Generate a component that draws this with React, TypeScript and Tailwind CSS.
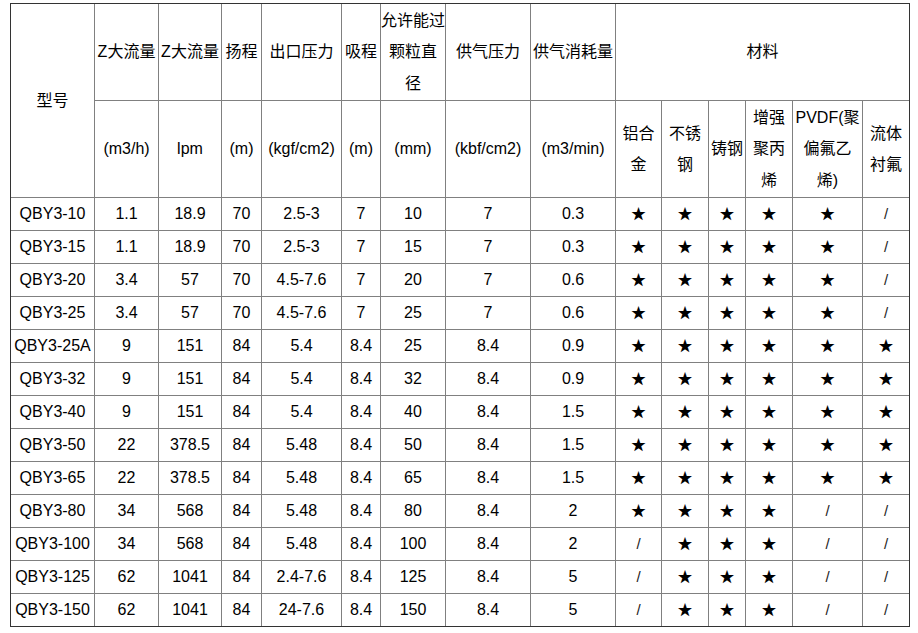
import React from "react";

const S = "★";
const N = "/";

const rows: string[][] = [
  ["QBY3-10", "1.1", "18.9", "70", "2.5-3", "7", "10", "7", "0.3", S, S, S, S, S, N],
  ["QBY3-15", "1.1", "18.9", "70", "2.5-3", "7", "15", "7", "0.3", S, S, S, S, S, N],
  ["QBY3-20", "3.4", "57", "70", "4.5-7.6", "7", "20", "7", "0.6", S, S, S, S, S, N],
  ["QBY3-25", "3.4", "57", "70", "4.5-7.6", "7", "25", "7", "0.6", S, S, S, S, S, N],
  ["QBY3-25A", "9", "151", "84", "5.4", "8.4", "25", "8.4", "0.9", S, S, S, S, S, S],
  ["QBY3-32", "9", "151", "84", "5.4", "8.4", "32", "8.4", "0.9", S, S, S, S, S, S],
  ["QBY3-40", "9", "151", "84", "5.4", "8.4", "40", "8.4", "1.5", S, S, S, S, S, S],
  ["QBY3-50", "22", "378.5", "84", "5.48", "8.4", "50", "8.4", "1.5", S, S, S, S, S, S],
  ["QBY3-65", "22", "378.5", "84", "5.48", "8.4", "65", "8.4", "1.5", S, S, S, S, S, S],
  ["QBY3-80", "34", "568", "84", "5.48", "8.4", "80", "8.4", "2", S, S, S, S, N, N],
  ["QBY3-100", "34", "568", "84", "5.48", "8.4", "100", "8.4", "2", N, S, S, S, N, N],
  ["QBY3-125", "62", "1041", "84", "2.4-7.6", "8.4", "125", "8.4", "5", N, S, S, S, N, N],
  ["QBY3-150", "62", "1041", "84", "24-7.6", "8.4", "150", "8.4", "5", N, S, S, S, N, N],
];

const headers: React.ReactNode[] = [
  "Z大流量",
  "Z大流量",
  "扬程",
  "出口压力",
  "吸程",
  <span key="yx" className="whitespace-nowrap">
    允许能过
    <br />
    颗粒直
    <br />径
  </span>,
  "供气压力",
  "供气消耗量",
];
const units = ["(m3/h)", "lpm", "(m)", "(kgf/cm2)", "(m)", "(mm)", "(kbf/cm2)", "(m3/min)"];
const materials = ["铝合金", "不锈钢", "铸钢", "增强聚丙烯", "PVDF(聚偏氟乙烯)", "流体衬氟"];

const cell = "flex items-center justify-center text-center px-px border-[#808080] leading-[31.5px]";

function Val({ v }: { v: string }) {
  if (v === S) {
    return <span className="text-[15px] text-black">{S}</span>;
  }
  if (v === N) {
    return <span className="text-[15px] text-[#222]">/</span>;
  }
  return <span>{v}</span>;
}

export default function App() {
  return (
    <div className="min-h-[633px] w-[918px] bg-white pt-[3px] pl-[10px]">
      <div
        className="grid w-[900px] border border-[#333333] text-[16px] text-black"
        style={{
          fontFamily: '"Liberation Sans", Arial, "Noto Sans CJK SC", sans-serif',
        }}
      >
        <div className="grid grid-cols-[84px_64px_63px_40px_80px_39px_65px_85px_85px_46px_47px_37px_47px_70px_46px] grid-rows-[97px_97px_repeat(12,33px)_32px]">
          <div className={`${cell} row-span-2 border-r border-b`}>型号</div>
          {headers.map((h, i) => (
            <div key={"h" + i} className={`${cell} border-r border-b ${i === 5 ? "px-0" : ""}`}>
              {h}
            </div>
          ))}
          <div className={`${cell} col-span-6 border-b`}>材料</div>
          {units.map((u, i) => (
            <div key={"u" + i} className={`${cell} border-r border-b`}>
              {u}
            </div>
          ))}
          {materials.map((m, i) => (
            <div
              key={"m" + i}
              className={`${cell} border-b ${i < materials.length - 1 ? "border-r" : ""}`}
            >
              {m}
            </div>
          ))}
          {rows.map((r, ri) =>
            r.map((v, ci) => (
              <div
                key={ri + "-" + ci}
                className={`${cell} ${ci < r.length - 1 ? "border-r" : ""} ${
                  ri < rows.length - 1 ? "border-b" : ""
                }`}
              >
                <Val v={v} />
              </div>
            ))
          )}
        </div>
      </div>
    </div>
  );
}
